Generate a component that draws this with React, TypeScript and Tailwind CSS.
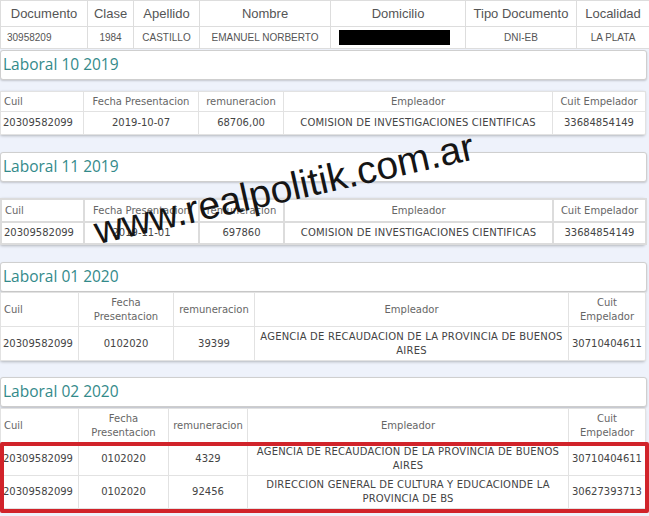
type Row = string[];

type Section = {
  title: string;
  gapTop: string;
  tableGap: string;
  widths: string[];
  headH: string;
  rowH: string;
  rows: Row[];
  dark?: boolean;
};

const heads = ["Cuil", "Fecha Presentacion", "remuneracion", "Empleador", "Cuit Empelador"];

const sections: Section[] = [
  {
    title: "Laboral 10 2019",
    gapTop: "mt-[1px]",
    tableGap: "mt-[11px]",
    widths: ["w-[83px]", "w-[115px]", "w-[85px]", "w-[269px]", "w-[93px]"],
    headH: "h-[20px]",
    rowH: "h-[23px]",
    rows: [["20309582099", "2019-10-07", "68706,00", "COMISION DE INVESTIGACIONES CIENTIFICAS", "33684854149"]],
  },
  {
    title: "Laboral 11 2019",
    gapTop: "mt-[17px]",
    tableGap: "mt-[16px]",
    widths: ["w-[83px]", "w-[115px]", "w-[85px]", "w-[269px]", "w-[93px]"],
    headH: "h-[23px]",
    rowH: "h-[22px]",
    rows: [["20309582099", "2019-11-01", "697860", "COMISION DE INVESTIGACIONES CIENTIFICAS", "33684854149"]],
    dark: true,
  },
  {
    title: "Laboral 01 2020",
    gapTop: "mt-[17px]",
    tableGap: "mt-0",
    widths: ["w-[78px]", "w-[95px]", "w-[81px]", "w-[314px]", "w-[77px]"],
    headH: "h-[34px]",
    rowH: "h-[34px]",
    rows: [["20309582099", "0102020", "39399", "AGENCIA DE RECAUDACION DE LA PROVINCIA DE BUENOS AIRES", "30710404611"]],
  },
  {
    title: "Laboral 02 2020",
    gapTop: "mt-[16px]",
    tableGap: "mt-[1px]",
    widths: ["w-[78px]", "w-[90px]", "w-[79px]", "w-[321px]", "w-[77px]"],
    headH: "h-[34px]",
    rowH: "h-[33px]",
    rows: [
      ["20309582099", "0102020", "4329", "AGENCIA DE RECAUDACION DE LA PROVINCIA DE BUENOS AIRES", "30710404611"],
      ["20309582099", "0102020", "92456", "DIRECCION GENERAL DE CULTURA Y EDUCACIONDE LA PROVINCIA DE BS", "30627393713"],
    ],
  },
];

const personHeads = [
  ["Documento", "w-[87px]"],
  ["Clase", "w-[46px]"],
  ["Apellido", "w-[66px]"],
  ["Nombre", "w-[131px]"],
  ["Domicilio", "w-[135px]"],
  ["Tipo Documento", "w-[111px]"],
  ["Localidad", "w-[73px]"],
];

const PersonTable = () => (
  <table className="w-[649px] table-fixed border-collapse bg-white font-['Liberation_Sans',Arial,sans-serif] text-[#555]">
    <thead>
      <tr className="h-[26px]">
        {personHeads.map(([h, w]) => (
          <th key={h} className={`${w} border border-[#ddd] px-1 text-center text-[13px] font-normal`}>
            {h}
          </th>
        ))}
      </tr>
    </thead>
    <tbody>
      <tr className="h-[22px] text-[10px]">
        <td className="border border-[#ddd] px-[6px] text-left">30958209</td>
        <td className="border border-[#ddd] text-center">1984</td>
        <td className="border border-[#ddd] text-center">CASTILLO</td>
        <td className="border border-[#ddd] text-center">EMANUEL NORBERTO</td>
        <td className="border border-[#ddd] px-[8px]">
          <div className="h-[15px] w-[111px] bg-black" />
        </td>
        <td className="border border-[#ddd] text-center">DNI-EB</td>
        <td className="border border-[#ddd] text-center">LA PLATA</td>
      </tr>
    </tbody>
  </table>
);

const TitlePanel = ({ title, gap }: { title: string; gap: string }) => (
  <div
    className={`${gap} flex h-[30px] w-[647px] items-center rounded-[3px] border border-[#cfcfcf] bg-white px-[2px] shadow-[0_1px_2px_rgba(0,0,0,0.18)]`}
  >
    <span className="font-['Open_Sans',sans-serif] text-[15.5px] text-[#338a8a]">{title}</span>
  </div>
);

const WorkTable = ({ s }: { s: Section }) => {
  const cell = s.dark ? "border-2 border-[#dcdcdc]" : "border border-[#e2e2e2]";
  return (
    <div className={`${s.tableGap} w-[645px] rounded-[2px] bg-white shadow-[0_1px_3px_rgba(0,0,0,0.25)]`}>
      <table className="w-[645px] table-fixed border-collapse font-['DejaVu_Sans',Verdana,sans-serif] text-[10px]">
        <thead>
          <tr className={s.headH}>
            {heads.map((h, i) => (
              <th
                key={h}
                className={`${s.widths[i]} ${cell} px-[3px] font-normal leading-[14px] text-[#666] ${
                  i === 0 ? "text-left" : "text-center"
                }`}
              >
                {h}
              </th>
            ))}
          </tr>
        </thead>
        <tbody>
          {s.rows.map((r, ri) => (
            <tr key={ri} className={s.rowH}>
              {r.map((c, i) => (
                <td
                  key={i}
                  className={`${cell} px-[3px] leading-[14px] text-[#444] ${
                    i === 0 ? "text-left pl-[2px]" : "text-center"
                  } ${i === 3 ? "tracking-[0.2px]" : ""}`}
                >
                  {c}
                </td>
              ))}
            </tr>
          ))}
        </tbody>
      </table>
    </div>
  );
};

export default function App() {
  return (
    <div className="relative h-[516px] w-[649px] overflow-hidden bg-[#eef2fb]">
      <PersonTable />
      {sections.map((s) => (
        <div key={s.title}>
          <TitlePanel title={s.title} gap={s.gapTop} />
          <WorkTable s={s} />
        </div>
      ))}

      {/* red highlight around the last two rows */}
      <div className="pointer-events-none absolute left-0 top-[442px] h-[71px] w-[649px] rounded-[2px] border-[4px] border-[#d1232a]" />

      {/* watermark */}
      <div className="pointer-events-none absolute left-[99px] top-[211px] origin-bottom-left -rotate-[12.7deg] whitespace-nowrap font-['Liberation_Sans',Arial,sans-serif] text-[39px] leading-none text-[#151515]">
        www.realpolitik.com.ar
      </div>
    </div>
  );
}
